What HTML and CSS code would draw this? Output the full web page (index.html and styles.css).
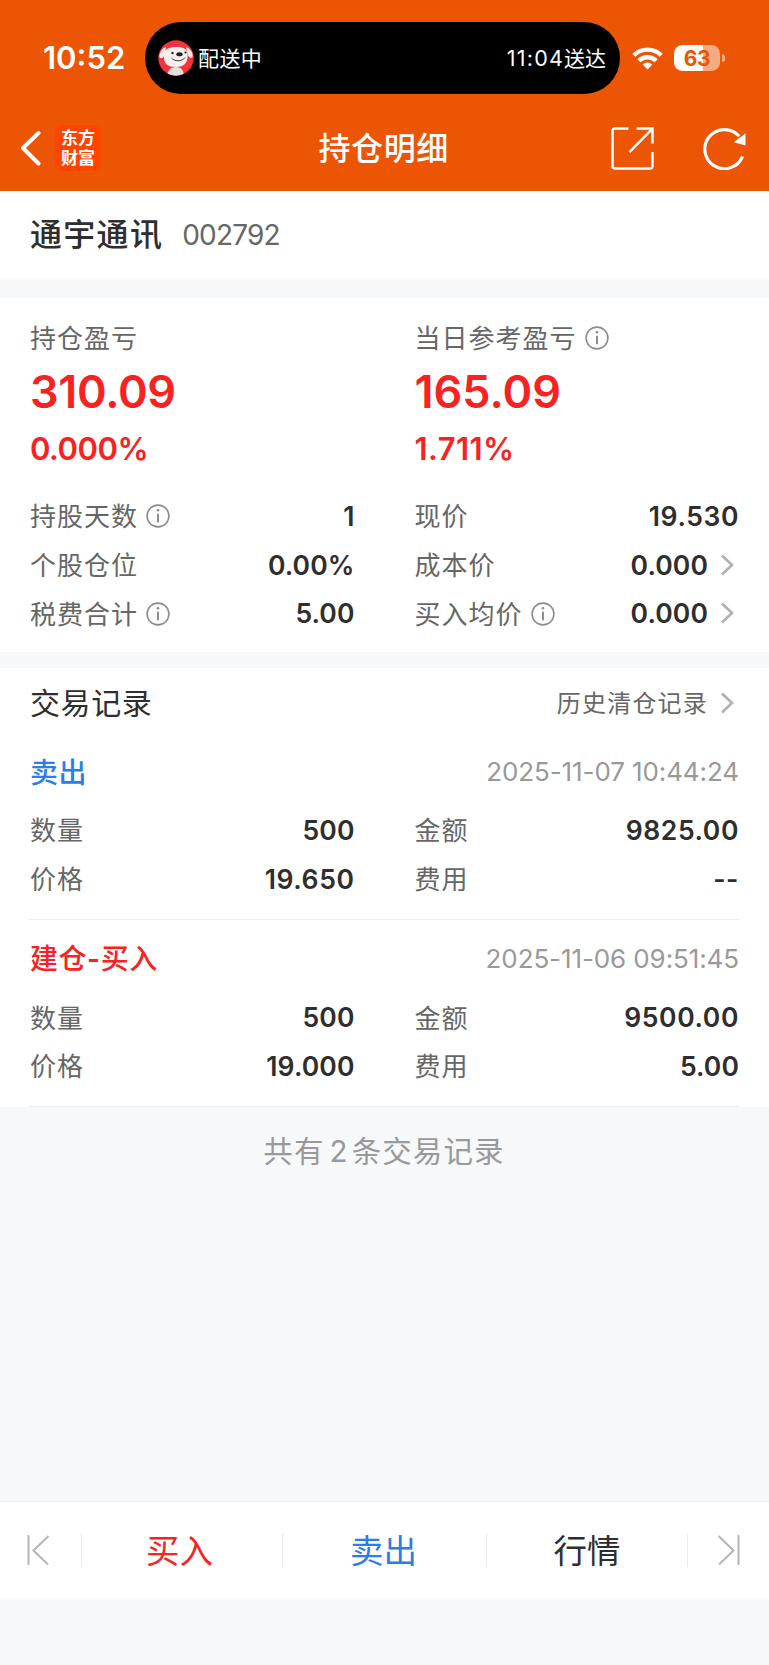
FILE: index.html
```html
<!DOCTYPE html>
<html lang="zh-CN">
<head>
<meta charset="utf-8">
<title>持仓明细</title>
<link rel="stylesheet" href="styles.css">
</head>
<body>
<svg class="defs" width="0" height="0">
  <symbol id="info" viewBox="0 0 24 24"><circle cx="12" cy="12" r="10.9" fill="none" stroke="#8c8c8c" stroke-width="1.6"/><circle cx="12" cy="6.3" r="1.3" fill="#8c8c8c"/><path d="M12 9.8V18.2" stroke="#8c8c8c" stroke-width="2"/></symbol>
  <symbol id="more" viewBox="0 0 14 24"><path d="M2 2.5L12 12L2 21.5" fill="none" stroke="#b2b2b2" stroke-width="2.8"/></symbol>
</svg>
<header class="top">
  <div class="status">
    <span class="time">10:52</span>
    <div class="island">
      <svg class="avatar" viewBox="0 0 36 36">
        <defs><clipPath id="disc"><circle cx="18" cy="18" r="17.7"/></clipPath></defs>
        <g clip-path="url(#disc)">
          <rect width="36" height="36" fill="#f8323a"/>
          <path d="M9.500 36C9 31 12 27 18 27S26 31 25.500 36Z" fill="#e6dfda"/>
          <path d="M8 7C4 8 .5 14 1.500 17.500C3 19 6 18 6.500 15Z" fill="#f0eae6"/>
          <path d="M28 7C32 8 35.500 13 34.500 17C33 19 30 17 29.500 14Z" fill="#f0eae6"/>
          <path d="M6 15C6 9 11 7 18 7S29.500 8 29.500 15C30 23 26 27 18 27S5 24 6 15Z" fill="#f5f0ed"/>
          <ellipse cx="21.500" cy="14.300" rx="3.200" ry="2" fill="#222"/>
          <circle cx="14.500" cy="13" r="1.200" fill="#222"/><circle cx="27.500" cy="12.500" r="1.100" fill="#222"/>
          <path d="M13.500 18C16 21.500 24 22 27 17.500" fill="none" stroke="#444" stroke-width="1"/>
        </g>
      </svg>
      <span class="delivery">配送中</span>
      <span class="eta"><span class="eta-time">11:04</span><span class="cjk">送达</span></span>
    </div>
    <svg class="wifi" viewBox="0 0 31 24"><g fill="none" stroke="#fff" stroke-width="4.300"><path d="M1.800 9.300A19.600 19.600 0 0 1 29.200 9.300"/><path d="M6.900 14.800A12.200 12.200 0 0 1 24.100 14.800"/></g><path d="M15.500 23.500L10.700 18.600A6.800 6.800 0 0 1 20.300 18.600Z" fill="#fff"/></svg>
    <div class="battery"><span class="level">63</span></div><i class="nub"></i>
  </div>
  <nav class="nav">
    <svg class="back" viewBox="0 0 22 36"><path d="M18.500 3L3 18L18.500 33.500" fill="none" stroke="#fff" stroke-width="4" stroke-linejoin="round" stroke-linecap="round"/></svg>
    <div class="brand">东方<br>财富</div>
    <h1 class="title">持仓明细</h1>
    <svg class="share" viewBox="0 0 42 42"><g fill="none" stroke="#fff" stroke-width="2.400"><path d="M17 1.500H4Q1.500 1.500 1.500 4V38Q1.500 40.500 4 40.500H38Q40.500 40.500 40.500 38V24.500"/><path d="M25 1.500H40.500V16M40 2L18 24.500"/></g></svg>
    <svg class="refresh" viewBox="0 0 44 44"><path d="M40.500 30A20 20 0 1 1 37 9.500" fill="none" stroke="#fff" stroke-width="3.200"/><path d="M43.500 6.500V19L31.500 15.500Z" fill="#fff"/></svg>
  </nav>
</header>

<section class="stock"><span class="name">通宇通讯</span><span class="code">002792</span></section>

<section class="summary">
  <div class="cols">
    <div class="headline"><div class="label-row"><span class="label">持仓盈亏</span></div><div class="big">310.09</div><div class="pct">0.000%</div></div>
    <div class="headline"><div class="label-row"><span class="label">当日参考盈亏</span><svg class="info"><use href="#info"/></svg></div><div class="big wide">165.09</div><div class="pct wide">1.711%</div></div>
  </div>
  <div class="cols facts">
    <div class="row"><span class="label">持股天数</span><svg class="info"><use href="#info"/></svg><b>1</b></div>
    <div class="row"><span class="label">现价</span><b class="wide">19.530</b></div>
    <div class="row"><span class="label">个股仓位</span><b>0.00%</b></div>
    <div class="row"><span class="label">成本价</span><b>0.000</b><svg class="more"><use href="#more"/></svg></div>
    <div class="row"><span class="label">税费合计</span><svg class="info"><use href="#info"/></svg><b>5.00</b></div>
    <div class="row"><span class="label">买入均价</span><svg class="info"><use href="#info"/></svg><b>0.000</b><svg class="more"><use href="#more"/></svg></div>
  </div>
</section>

<section class="records">
  <div class="records-head"><h2>交易记录</h2><span class="history">历史清仓记录</span><svg class="more"><use href="#more"/></svg></div>
  <article class="trade">
    <div class="trade-head"><span class="side sell">卖出</span><time>2025-11-07 10:44:24</time></div>
    <div class="cols">
      <div class="row"><span class="label">数量</span><b>500</b></div>
      <div class="row"><span class="label">金额</span><b class="wide">9825.00</b></div>
      <div class="row"><span class="label">价格</span><b class="wide">19.650</b></div>
      <div class="row"><span class="label">费用</span><b class="wide">--</b></div>
    </div>
  </article>
  <article class="trade">
    <div class="trade-head"><span class="side buy">建仓<span class="dash">-</span>买入</span><time>2025-11-06 09:51:45</time></div>
    <div class="cols">
      <div class="row"><span class="label">数量</span><b>500</b></div>
      <div class="row"><span class="label">金额</span><b class="wide">9500.00</b></div>
      <div class="row"><span class="label">价格</span><b>19.000</b></div>
      <div class="row"><span class="label">费用</span><b>5.00</b></div>
    </div>
  </article>
</section>

<p class="count"><span>共有</span><span class="num">2</span><span>条交易记录</span></p>

<footer class="tabs">
  <div class="tab first"><svg class="edge" viewBox="0 0 24 30"><path d="M2.500 0V30M22.500 1L7.500 15.500L22 29.500" fill="none" stroke="#b5b5b5" stroke-width="2"/></svg></div>
  <div class="tab buy">买入</div>
  <div class="tab sell">卖出</div>
  <div class="tab">行情</div>
  <div class="tab"><svg class="edge" viewBox="0 0 24 30"><path d="M21.500 0V30M1.500 1L16.500 15.500L2 29.500" fill="none" stroke="#b5b5b5" stroke-width="2"/></svg></div>
</footer>
</body>
</html>
```
FILE: styles.css
```css
* { box-sizing: border-box; }
body {
  margin: 0;
  width: 769px;
  height: 1665px;
  display: flex;
  flex-direction: column;
  background: #f6f8fa;
  color: #2e2e2e;
  font-family: "Noto Sans CJK SC", sans-serif;
  overflow: hidden;
}
body > * { flex-shrink: 0; }
.defs { position: absolute; }
svg { display: block; flex-shrink: 0; }
h1, h2, p { margin: 0; font-weight: 400; }

.top { height: 191px; background: #eb5503; color: #fff; padding-top: 22px; }
.status { height: 72px; display: flex; align-items: center; }
.time { width: 102px; margin-left: 43px; font: 600 31px/40px Inter, sans-serif; white-space: nowrap; }
.island { width: 475px; height: 72px; border-radius: 36px; background: #000; display: flex; align-items: center; padding: 0 14px 0 13px; }
.avatar { width: 36px; height: 36px; }
.delivery { font-size: 21px; line-height: 30px; letter-spacing: .4px; margin: -3px auto 0 4px; }
.eta { display: flex; align-items: center; font-size: 21px; line-height: 30px; }
.eta-time { font-family: Inter, sans-serif; font-size: 21.500px; letter-spacing: 1.200px; }
.cjk { margin-top: -2px; }
.wifi { width: 31px; height: 24px; margin: 0 11px 0 12px; }
.battery { width: 46px; height: 26px; border-radius: 8.500px; background: linear-gradient(90deg, #fff 63%, #f5ab82 63%); text-align: center; }
.level { display: block; font: 700 21px/27px Inter, sans-serif; color: #eb5503; letter-spacing: -.3px; }
.nub { width: 3px; height: 8px; margin-left: 2px; border-radius: 0 4px 4px 0; background: #f5ab82; }

.nav { height: 97px; display: flex; align-items: center; padding: 12px 23px 0 20px; }
.back { width: 22px; height: 36px; margin-top: -1px; }
.brand { width: 46px; height: 46px; margin: -1px 0 0 13px; padding: 2px 0 0; border-radius: 8px; background: #ff4400; text-align: center; font-weight: 700; font-size: 17px; line-height: 19.500px; }
.title { font-size: 32px; line-height: 40px; font-weight: 500; letter-spacing: .6px; margin: -5px 0 0 217.500px; }
.share { width: 43px; height: 43px; margin-left: auto; }
.refresh { width: 43px; height: 43px; margin-left: 49px; }

.stock { height: 88px; background: #fff; display: flex; align-items: center; padding: 0 30px; }
.name { font-size: 32px; line-height: 40px; font-weight: 500; letter-spacing: 1.300px; margin-top: -6px; }
.code { font: 400 28px/36px Inter, sans-serif; letter-spacing: -.8px; color: #666; margin-left: 19px; }

.summary { height: 354px; margin-top: 19px; padding-top: 20px; background: #fff; }
.cols { display: grid; grid-template-columns: 1fr 1fr; column-gap: 60px; padding: 0 30px; }
.label-row { height: 39px; display: flex; align-items: center; }
.label { font-size: 26px; line-height: 36px; letter-spacing: 1px; color: #666; margin-top: -1.500px; }
.facts .label, .trade .label { margin-top: -2.500px; }
.info { width: 24px; height: 24px; margin-left: 8px; }
.big { height: 69px; font: 600 45px/69px Inter, sans-serif; letter-spacing: -.3px; color: #f82222; }
.big.wide { letter-spacing: 0; }
.pct { height: 46px; font: 600 31px/46px Inter, sans-serif; letter-spacing: -.5px; color: #f82222; }
.pct.wide { letter-spacing: .4px; }
.facts { margin-top: 20px; }
.row { height: 48.750px; display: flex; align-items: center; }
.row b { margin: -1px 0 0 auto; font: 600 26.500px/36px Inter, sans-serif; letter-spacing: .1px; }
.row b.wide { letter-spacing: .6px; }
.more { width: 14px; height: 24px; margin: -1px 5px 0 12px; }

.records { margin-top: 16px; background: #fff; }
.records-head { height: 64px; padding: 7px 30px 0; display: flex; align-items: center; }
.records-head h2 { font-size: 30px; line-height: 40px; letter-spacing: .6px; margin-top: -5px; }
.history { margin: -3px 0 0 auto; font-size: 24px; line-height: 36px; letter-spacing: 1.200px; color: #666; }
.trade { height: 187.500px; padding-top: 14px; position: relative; }
.trade::after { content: ""; position: absolute; left: 29px; right: 30px; bottom: 0; height: 1px; background: #eeeff1; }
.trade-head { height: 51px; margin-bottom: 9px; padding: 0 30px; display: flex; align-items: center; justify-content: space-between; }
.side { font-size: 28px; line-height: 36px; font-weight: 500; letter-spacing: .4px; margin-top: -2px; }
.dash { display: inline-block; width: 14px; font-family: Inter, sans-serif; font-weight: 600; text-align: center; }
.buy { color: #f82222; }
.sell { color: #2b7de9; }
time { font: 400 26px/36px Inter, sans-serif; letter-spacing: -.1px; color: #999; }

.count { height: 36px; margin-top: 21.500px; display: flex; justify-content: center; font-size: 29.500px; line-height: 40px; letter-spacing: 1.100px; color: #999; padding-right: 1px; }
.num { font-family: Inter, sans-serif; margin: 2px 3px 0 5px; }

.tabs { height: 98px; margin-top: 336.500px; border-top: 1px solid #eeeff1; background: #fff; display: grid; grid-template-columns: 82px 201px 204px 201px 81px; align-items: center; }
.tab { height: 33px; display: flex; align-items: center; justify-content: center; font-size: 33.500px; line-height: 28px; padding-bottom: 4px; border-right: 1px solid #ebebeb; }
.tab.first { padding-right: 5px; }
.tab.buy { padding-right: 5px; }
.tab.sell { padding-right: 2px; }
.tab:last-child { border-right: 0; }
.edge { width: 24px; height: 30px; margin-top: 3px; }
```
